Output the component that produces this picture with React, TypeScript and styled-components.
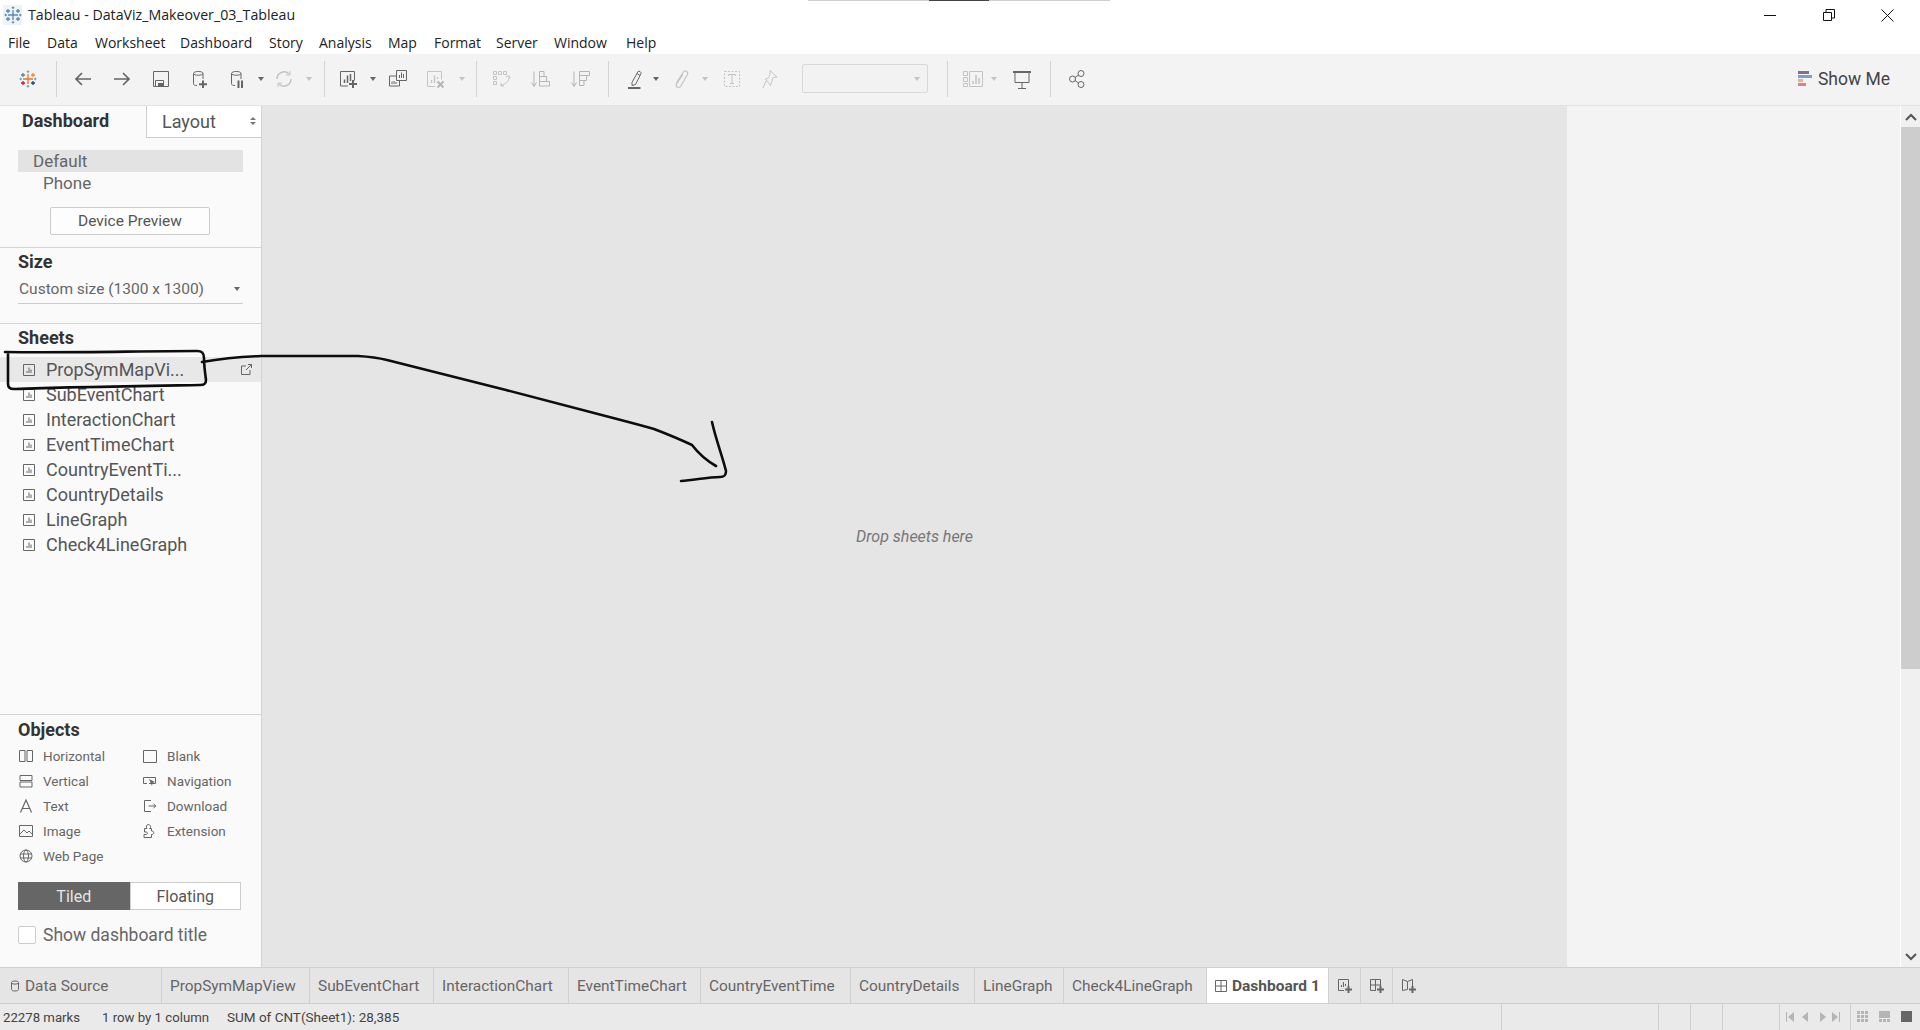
import React from 'react'
import styled, { createGlobalStyle } from 'styled-components'

const GlobalStyle = createGlobalStyle`
html, body { margin: 0; padding: 0; background: #fff; }
* { box-sizing: border-box; }
body { font-family: "Roboto", "Liberation Sans", sans-serif; color: #555; }
`

const SHEETS = ['PropSymMapVi...', 'SubEventChart', 'InteractionChart', 'EventTimeChart', 'CountryEventTi...', 'CountryDetails', 'LineGraph', 'Check4LineGraph']
const MENUS = [['File', 8], ['Data', 47], ['Worksheet', 95], ['Dashboard', 180], ['Story', 269], ['Analysis', 319], ['Map', 388], ['Format', 434], ['Server', 496], ['Window', 554], ['Help', 626]] as const
const TABS = [['PropSymMapView', 148], ['SubEventChart', 124], ['InteractionChart', 135], ['EventTimeChart', 132], ['CountryEventTime', 150], ['CountryDetails', 124], ['LineGraph', 89], ['Check4LineGraph', 143]] as const

const DARK = '#666'
const OFF = '#c4c4c4'

const Svg = ({ w = 20, h = 20, children, c = DARK }: { w?: number; h?: number; c?: string; children: React.ReactNode }) => (
    <svg width={w} height={h} viewBox={`0 0 ${w} ${h}`} fill="none" stroke={c} strokeWidth="1" style={{ flexShrink: 0 }}>{children}</svg>
)

const TableauLogo = ({ mono }: { mono?: boolean }) => {
    const col = (c: string) => (mono ? '#5b86b5' : c)
    return (
        <svg width="18" height="18" viewBox="0 0 18 18" strokeWidth="1.3" fill="none">
            <path d="M9 4v10M4 9h10" stroke={col('#e8762b')} />
            <path d="M4 3v4M2 5h4" stroke={col('#5b879b')} />
            <path d="M14 3v4M12 5h4" stroke={col('#eb912b')} />
            <path d="M4 11v4M2 13h4" stroke={col('#c72035')} />
            <path d="M14 11v4M12 13h4" stroke={col('#1f447e')} />
            <path d="M9 0.5v2.5M7.7 1.7h2.6M9 15v2.5M7.7 16.3h2.6M0.5 9h2.5M1.7 7.7v2.6M15 9h2.5M16.3 7.7v2.6" stroke={col('#7099a6')} strokeWidth="1" />
        </svg>
    )
}

const Cylinder = () => <path d="M4.500 4.500C4.500 1.800 14 1.800 14 4.500V10M4.500 4.500C4.500 6.800 14 6.800 14 4.500M4.500 4.500V14.500C4.500 16 5.500 16.500 8 16.500" />

const TOOLS: Record<string, React.ReactNode> = {
    logo: <TableauLogo />,
    back: <Svg><path d="M18 10H3M9 4l-6 6 6 6" strokeWidth="1.7" /></Svg>,
    fwd: <Svg><path d="M2 10h15M11 4l6 6-6 6" strokeWidth="1.7" /></Svg>,
    save: <Svg><path d="M2.500 2.500h15v15h-15zM4.500 17v-5.500h8V17" /><path d="M7 14h5v3H7z" fill={DARK} stroke="none" /></Svg>,
    newds: <Svg><Cylinder /><path d="M14 11.500v7.500M10 15.200h8" strokeWidth="2" /></Svg>,
    pause: <Svg><Cylinder /><path d="M11.500 11.500V19M15 11.500V19" strokeWidth="2" /></Svg>,
    refresh: <Svg c={OFF}><path d="M3 10a7 7 0 0 1 12-5M17 10a7 7 0 0 1-12 5" strokeWidth="1.5" /><path d="M16 2v4h-4M4 18v-4h4" /></Svg>,
    newsheet: <Svg><path d="M2.500 2.500h14v9M2.500 2.500v14.500H10" /><path d="M6.500 14v-3.500M9.500 14V6.500M12.500 12V5" strokeWidth="1.500" /><path d="M15 11v8M11 15h8" strokeWidth="2" /></Svg>,
    dup: <Svg><path d="M8.500 1.500h10v10h-10zM8.500 7H1.500v10h10v-5.500" /><path d="M11.500 9V6M13.500 9V3.500M15.500 9V5M4 15v-2.500M6 15v-3M8 15v-2" /></Svg>,
    clear: <Svg c={OFF}><path d="M2.500 2.500h14v8M2.500 2.500v15H10" /><path d="M6.500 14v-3M9.500 14V6.500M12.500 10V8" strokeWidth="1.300" /><path d="M12.500 12.500l6 6M18.500 12.500l-6 6" strokeWidth="2" stroke="#b5b5b5" /></Svg>,
    swap: <Svg c={OFF}><path d="M2.500 2.500h3v3h-3zM7.500 2.500h3v3h-3zM12.500 2.500h3v3h-3zM2.500 7.500h3v3h-3zM2.500 12.500h3v3h-3zM18 8c0 4-3 7-8 8.500M10 14v3h3M15 8l3-1.500 1 3" /></Svg>,
    sortUp: <Svg c="#b5b5b5"><path d="M4 2.500V17M1.500 13.500L4 17.500l2.500-4" /><path d="M9.500 2.500h4.500v5H9.500zM9.500 7.500h7v5h-7zM9.500 12.500h10v4.500h-10z" /></Svg>,
    sortDown: <Svg c="#b5b5b5"><path d="M4 2.500V17M1.500 13.500L4 17.500l2.500-4" /><path d="M9.500 2.500h10v4h-10zM9.500 6.500h7v5h-7zM9.500 11.500h4.500v5H9.500z" /></Svg>,
    pen: <Svg><path d="M7 13.500L13 2.500c1-1 3.500.5 3 2L10.500 15.500l-3.500 1zM12 4.500l3 2" /><path d="M3 19h12.500" strokeWidth="2" /></Svg>,
    clip: <Svg c={OFF}><path d="M5 14.500L12 3.500c2-3 5.500-1 4.500 2L9.500 17.500c-1.500 2-5 1-4-2.500l6.500-9.500" strokeWidth="1.200" /></Svg>,
    text: <Svg c={OFF}><path d="M2.500 2.500h15v15h-15z" strokeDasharray="2 1.500" /><path d="M6.500 7V5.500h7V7M10 5.500v9M8 14.500h4" /></Svg>,
    pin: <Svg c={OFF}><path d="M11 1.500l7 6.500-4 .5-1.500 5-1 3-5-6.500 3-1 1.500-3.500zM7 12l-3 7" /></Svg>,
    fit: <Svg w={20} c={OFF}><path d="M.5 2.500h4v4h-4zM.5 8.500h4v4h-4zM.5 14.500h4v3h-4zM6.500 2.500h13v15h-13z" /><path d="M10 15v-3M13 15V6M16 15V9" strokeWidth="1.500" /></Svg>,
    present: <Svg w={18}><path d="M0 3h18" strokeWidth="2" /><path d="M2 3v10.500h14V3M9 13.500V19M5 19.500h8" /></Svg>,
    share: <Svg w={16}><circle cx="3.500" cy="10" r="3" /><circle cx="12" cy="4.500" r="3" /><circle cx="12" cy="15.500" r="3" /><path d="M6 8.500l3.500-2.500M6 11.500l3.500 2.500" /></Svg>,
}

type Tool = { w: number; kind: 'tool' | 'caret' | 'sep'; icon?: string; off?: boolean }
const tool = (w: number, icon: string): Tool => ({ w, kind: 'tool', icon })
const caret = (w: number, off = true): Tool => ({ w, kind: 'caret', off })
const sep = (w: number): Tool => ({ w, kind: 'sep' })

const LEFT_TOOLS: Tool[] = [
    tool(40, 'logo'), sep(16), tool(38, 'back'), tool(40, 'fwd'), tool(38, 'save'), tool(38, 'newds'), tool(38, 'pause'), caret(10, false),
    tool(36, 'refresh'), caret(14), sep(16), tool(32, 'newsheet'), caret(18, false), tool(32, 'dup'), tool(42, 'clear'), caret(12),
    sep(16), tool(34, 'swap'), tool(44, 'sortUp'), tool(36, 'sortDown'), sep(20), tool(34, 'pen'), caret(8, false), tool(42, 'clip'),
    caret(6), tool(48, 'text'), tool(26, 'pin'),
]
const RIGHT_TOOLS: Tool[] = [sep(38), tool(14, 'fit'), caret(28), tool(28, 'present'), sep(28), tool(26, 'share')]

const renderTools = (list: Tool[]) => list.map((t, i) => {
    if (t.kind === 'sep') return <ToolSep key={i} $w={t.w}><i /></ToolSep>
    if (t.kind === 'caret') return <ToolSlot key={i} $w={t.w}><Caret $off={t.off} /></ToolSlot>
    return <ToolSlot key={i} $w={t.w}>{TOOLS[t.icon as string]}</ToolSlot>
})

const OBJECTS_LEFT: [string, React.ReactNode][] = [
    ['Horizontal', <Svg w={14} h={14}><path d="M.5 1.500h5.500v11H.5zM8 1.500h5.500v11H8z" /></Svg>],
    ['Vertical', <Svg w={14} h={14}><path d="M1 1.500h12v5H1zM1 8h12v5H1z" /></Svg>],
    ['Text', <Svg w={14} h={14}><path d="M1.500 13.500L7 1l5.500 12.500M3.500 9.500h7" strokeWidth="1.200" /></Svg>],
    ['Image', <Svg w={14} h={14}><path d="M.5 1.500h13v11H.5zM1 10l4-4 3 3 2-2 3 3" /></Svg>],
    ['Web Page', <Svg w={14} h={14}><circle cx="7" cy="7" r="6" /><ellipse cx="7" cy="7" rx="2.500" ry="6" /><path d="M1 5h12M1 9h12" /></Svg>],
]
const OBJECTS_RIGHT: [string, React.ReactNode][] = [
    ['Blank', <Svg w={14} h={14}><path d="M.5 1.500h13v12H.5z" /></Svg>],
    ['Navigation', <Svg w={14} h={14}><path d="M.5 3.500h12v6H6M.5 3.500v6H4" /><path d="M6 5l6 3-2.500 1L9 12z" fill={DARK} stroke="none" /></Svg>],
    ['Download', <Svg w={14} h={14}><path d="M8 1.500H1.500v11H8M5.500 7h7M10.500 5l2.500 2-2.500 2" /></Svg>],
    ['Extension', <Svg w={14} h={14}><path d="M4 4.500H1.500v3.500H3c2 0 2 2.500 0 2.500H1v3h7.500v-3c3 .5 3-4 0-3.500V4.500H6.500c2-1 1-4-1.200-4S3 3.500 4 4.500z" /></Svg>],
]

const ChartSheet = () => (
    <Svg w={14} h={14}><path d="M1.500 1.500h11v11h-11z" /><path d="M5 10V8M7 10V4.500M9 10V6.500" /></Svg>
)

const App = () => (
    <Page>
        <GlobalStyle />
        <TitleBar>
            <TableauLogoBox><TableauLogo mono /></TableauLogoBox>
            <TitleText>Tableau - DataViz_Makeover_03_Tableau</TitleText>
            <WinControls>
                <WinBtn><svg width="12" height="12" fill="none" stroke="#111"><path d="M0 6.500h12" /></svg></WinBtn>
                <WinBtn><svg width="12" height="12" fill="none" stroke="#111"><path d="M.5 3.500h8v8h-8zM3 3V.5h8.500V9H9" /></svg></WinBtn>
                <WinBtn><svg width="13" height="13" fill="none" stroke="#111"><path d="M.5.5l12 12M12.500.5l-12 12" /></svg></WinBtn>
            </WinControls>
        </TitleBar>
        <MenuBar>
            {MENUS.map(([label, x], i) => (
                <MenuItem key={label} $gap={i === 0 ? x : x - MENUS[i - 1][1]}>{label}</MenuItem>
            ))}
        </MenuBar>
        <Toolbar>
            {renderTools(LEFT_TOOLS)}
            <FontSelect><Caret $off /></FontSelect>
            {renderTools(RIGHT_TOOLS)}
            <ShowMe>
                <ShowMeIcon>
                    <Bar $w={11} $c="#7f6f90" /><Bar $w={14} $c="#7e9ec9" /><Bar $w={5} $c="#e9ae8d" /><Bar $w={8} $c="#e87c86" />
                </ShowMeIcon>
                Show Me
            </ShowMe>
        </Toolbar>
        <Main>
            <Sidebar>
                <PaneTabs>
                    <ActiveTab>Dashboard</ActiveTab>
                    <LayoutTab>Layout<SpinArrows /></LayoutTab>
                </PaneTabs>
                <DevicePanel>
                    <DeviceRow $active>Default</DeviceRow>
                    <PhoneRow>Phone</PhoneRow>
                    <PreviewButton>Device Preview</PreviewButton>
                </DevicePanel>
                <SizePanel>
                    <Heading>Size</Heading>
                    <SizeSelect>Custom size (1300 x 1300)<Caret /></SizeSelect>
                </SizePanel>
                <SheetsPanel>
                    <SheetsHeading>Sheets</SheetsHeading>
                    {SHEETS.map((s, i) => (
                        <SheetRow key={s} $active={i === 0}>
                            <ChartSheet />
                            <span>{s}</span>
                            {i === 0 && (
                                <OpenIcon><svg width="11" height="11" fill="none" stroke="#666"><path d="M5 2H.5v8.500H9V6M5 6l5.500-5.500M7 .5h3.500V4" /></svg></OpenIcon>
                            )}
                        </SheetRow>
                    ))}
                </SheetsPanel>
                <ObjectsPanel>
                    <ObjectsHeading>Objects</ObjectsHeading>
                    <ObjectsGrid>
                        <ObjectCol>
                            {OBJECTS_LEFT.map(([label, icon]) => <ObjectItem key={label}>{icon}<span>{label}</span></ObjectItem>)}
                        </ObjectCol>
                        <ObjectCol>
                            {OBJECTS_RIGHT.map(([label, icon]) => <ObjectItem key={label}>{icon}<span>{label}</span></ObjectItem>)}
                        </ObjectCol>
                    </ObjectsGrid>
                    <Toggle>
                        <ToggleBtn $on>Tiled</ToggleBtn>
                        <ToggleBtn>Floating</ToggleBtn>
                    </Toggle>
                    <CheckRow><CheckBox />Show dashboard title</CheckRow>
                </ObjectsPanel>
            </Sidebar>
            <Canvas><DropHint>Drop sheets here</DropHint></Canvas>
            <RightGutter />
            <ScrollBar>
                <ScrollArrow><svg width="12" height="8" fill="none" stroke="#555" strokeWidth="2"><path d="M1 7l5-5 5 5" /></svg></ScrollArrow>
                <ScrollThumb />
                <ScrollTrack />
                <ScrollArrow><svg width="12" height="8" fill="none" stroke="#555" strokeWidth="2"><path d="M1 1l5 5 5-5" /></svg></ScrollArrow>
            </ScrollBar>
        </Main>
        <TabBar>
            <Tab $w={162}>
                <svg width="8" height="12" fill="none" stroke="#666" style={{ margin: '0 6px 0 3px' }}><path d="M.5 2.500C.5.500 7.500.500 7.500 2.500v7c0 2-7 2-7 0zM.5 3c1 1.500 6 1.500 7 0" /></svg>
                Data Source
            </Tab>
            {TABS.map(([label, w]) => <Tab key={label} $w={w}>{label}</Tab>)}
            <ActiveSheetTab>
                <svg width="12" height="12" fill="none" stroke="#666" style={{ marginRight: 5 }}><path d="M.5.500h11v11H.5zM6 .5v11M.5 6h11" /></svg>
                Dashboard 1
            </ActiveSheetTab>
            <AddTab>
                <Svg w={16} h={16}><path d="M1.500 1.500h10v7M1.500 1.500v11H7M4.500 9V7M6.500 9V4M8.500 8V6" /><path d="M11.500 8v7M8 11.500h7" strokeWidth="2" /></Svg>
            </AddTab>
            <AddTab>
                <Svg w={16} h={16}><path d="M1.500 1.500h10v7M1.500 1.500v11H7M6.500 1.500v11M1.500 7h10" /><path d="M11.500 8v7M8 11.500h7" strokeWidth="2" /></Svg>
            </AddTab>
            <AddTab>
                <Svg w={16} h={16}><path d="M1.500 1.500l5 2 5-2v7M1.500 1.500v11l5-1M6.500 3.500v8" /><path d="M11.500 8v7M8 11.500h7" strokeWidth="2" /></Svg>
            </AddTab>
        </TabBar>
        <StatusBar>
            <Marks>22278 marks</Marks>
            <RowsText>1 row by 1 column</RowsText>
            <SumText>SUM of CNT(Sheet1): 28,385</SumText>
            <StatusCell $w={157} />
            <StatusCell $w={32} />
            <StatusCell $w={32} />
            <StatusCell $w={57} />
            <NavCell>
                <svg width="60" height="10" fill="#b5b5b5"><path d="M1 0h1v10H1zM9 0v10L3 5zM23 0v10l-6-5zM35 0v10l6-5zM47 0v10l6-5zM54 0h1v10h-1z" /></svg>
            </NavCell>
            <ViewCell>
                <svg width="58" height="12" viewBox="0 0 58 12">
                    <path d="M0 0h3v3H0zM4 0h3v3H4zM8 0h3v3H8zM0 4h3v3H0zM4 4h3v3H4zM8 4h3v3H8zM0 8h3v3H0zM4 8h3v3H4zM8 8h3v3H8z" fill="#b5b5b5" />
                    <path d="M22 0h11v7H22zM22 8h3v3h-3zM26 8h3v3h-3zM30 8h3v3h-3z" fill="#b5b5b5" />
                    <path d="M44 0h11v11H44z" fill="#666" />
                </svg>
            </ViewCell>
        </StatusBar>

        <TopStrip><TopStripMark /></TopStrip>
        <InkLayer width="1920" height="1030" viewBox="0 0 1920 1030">
            <path d="M5 352C70 353 140 351 197 351C202 351 204 353 204 358C204 366 205 372 206 380C206 384 204 385 200 385C140 386 70 387 14 389C10 389 8 387 8 384L8 353" />
            <path d="M202 362Q230 357 261 356L358 356Q375 357 387 360L506 390L617 419Q640 425 654 429Q675 437 692 445Q702 458 716 466" />
            <path d="M712 422C716 440 722 455 726 471C726 476 724 477 720 477C708 477 695 480 681 481" />
        </InkLayer>
    </Page>
)

export default App

const Page = styled.div`
position: relative;
display: flex;
flex-direction: column;
width: 1920px;
height: 1030px;
overflow: hidden;
background: #fff;
`

const TitleBar = styled.div`
display: flex;
align-items: center;
height: 30px;
padding-left: 3px;
flex-shrink: 0;
`

const TableauLogoBox = styled.div`
display: flex;
align-items: center;
justify-content: center;
width: 19px;
height: 20px;
margin-right: 6px;
background: #eef3f8;
`

const TitleText = styled.div`
font-family: "Open Sans", "Liberation Sans", sans-serif;
font-size: 14.2px;
color: #222;
margin-top: -2px;
`

const WinControls = styled.div`
display: flex;
margin-left: auto;
padding-right: 3px;
`

const WinBtn = styled.div`
display: flex;
align-items: center;
justify-content: center;
width: 59px;
height: 28px;
`

const MenuBar = styled.div`
display: flex;
align-items: center;
height: 24px;
flex-shrink: 0;
`

const MenuItem = styled.div<{ $gap: number }>`
width: 0;
margin-left: ${p => p.$gap}px;
white-space: nowrap;
font-family: "Open Sans", "Liberation Sans", sans-serif;
font-size: 14px;
color: #222;
`

const Toolbar = styled.div`
display: flex;
align-items: center;
height: 51px;
flex-shrink: 0;
padding: 0 0 2px 8px;
background: #f3f3f3;
`

const ToolSlot = styled.div<{ $w: number }>`
display: flex;
align-items: center;
justify-content: center;
width: ${p => p.$w}px;
height: 36px;
flex-shrink: 0;
`

const ToolSep = styled(ToolSlot)`
i {
    display: block;
    width: 1px;
    height: 36px;
    background: #d4d4d4;
}
`

const Caret = styled.span<{ $off?: boolean }>`
display: inline-block;
flex-shrink: 0;
width: 0;
height: 0;
border-left: 3.5px solid transparent;
border-right: 3.5px solid transparent;
border-top: 4px solid ${p => (p.$off ? '#c4c4c4' : '#666')};
`

const FontSelect = styled.div`
display: flex;
align-items: center;
justify-content: flex-end;
width: 126px;
height: 29px;
margin-left: 20px;
padding-right: 7px;
border: 1px solid #d8d8d8;
border-radius: 2px;
background: #f2f2f2;
flex-shrink: 0;
`

const ShowMe = styled.div`
display: flex;
align-items: center;
margin-left: auto;
padding-right: 30px;
font-size: 17.5px;
color: #444;
`

const ShowMeIcon = styled.div`
display: flex;
flex-direction: column;
gap: 1px;
width: 14px;
margin-right: 6px;
`

const Bar = styled.span<{ $w: number; $c: string }>`
display: block;
width: ${p => p.$w}px;
height: 3px;
background: ${p => p.$c};
`

const Main = styled.div`
display: flex;
flex: 1;
min-height: 0;
border-top: 1px solid #e2e2e2;
`

const Sidebar = styled.div`
display: flex;
flex-direction: column;
width: 262px;
flex-shrink: 0;
background: #fafafa;
border-right: 1px solid #d4d4d4;
`

const PaneTabs = styled.div`
display: flex;
height: 32px;
flex-shrink: 0;
`

const ActiveTab = styled.div`
display: flex;
align-items: center;
width: 146px;
padding: 0 0 3px 22px;
font-size: 18px;
font-weight: 700;
color: #333;
`

const LayoutTab = styled.div`
display: flex;
align-items: center;
flex: 1;
padding-left: 15px;
font-size: 18px;
color: #555;
background: #fff;
border-left: 1px solid #ccc;
border-bottom: 1px solid #ccc;
`

const SpinArrows = styled.span`
position: relative;
margin-left: 34px;
width: 0;
height: 0;
border-left: 3px solid transparent;
border-right: 3px solid transparent;
border-bottom: 3.5px solid #777;
transform: translateY(-3px);
&::after {
    content: '';
    position: absolute;
    left: -3px;
    top: 5px;
    width: 0;
    height: 0;
    border-left: 3px solid transparent;
    border-right: 3px solid transparent;
    border-top: 3.5px solid #777;
}
`

const DevicePanel = styled.div`
display: flex;
flex-direction: column;
height: 110px;
padding-top: 12px;
flex-shrink: 0;
border-bottom: 1px solid #d4d4d4;
`

const DeviceRow = styled.div<{ $active?: boolean }>`
display: flex;
align-items: center;
height: 22px;
margin: 0 18px;
padding-left: 15px;
font-size: 17px;
color: #666;
background: ${p => (p.$active ? '#e3e3e3' : 'transparent')};
`

const PhoneRow = styled(DeviceRow)`
padding-left: 25px;
`

const PreviewButton = styled.div`
display: flex;
align-items: center;
justify-content: center;
width: 160px;
height: 28px;
margin: 13px 0 0 50px;
font-size: 15.5px;
color: #555;
background: #fdfdfd;
border: 1px solid #ccc;
border-radius: 2px;
`

const Heading = styled.div`
font-size: 18px;
font-weight: 700;
color: #333;
line-height: 20px;
`

const SizePanel = styled.div`
display: flex;
flex-direction: column;
height: 76px;
padding: 4px 18px 0;
flex-shrink: 0;
border-bottom: 1px solid #d4d4d4;
`

const SizeSelect = styled.div`
display: flex;
align-items: center;
justify-content: space-between;
height: 30px;
margin-top: 2px;
padding: 0 3px 0 1px;
font-size: 15.5px;
color: #666;
border-bottom: 1px solid #ccc;
`

const SheetsPanel = styled.div`
display: flex;
flex-direction: column;
flex: 1;
padding-top: 4px;
border-bottom: 1px solid #d4d4d4;
`

const SheetsHeading = styled(Heading)`
padding-left: 18px;
margin-bottom: 9px;
`

const SheetRow = styled.div<{ $active?: boolean }>`
position: relative;
display: flex;
align-items: center;
height: 25px;
padding-left: 22px;
font-size: 18px;
color: #555;
background: ${p => (p.$active ? '#e8e8e8' : 'transparent')};
span {
    margin-left: 10px;
}
`

const OpenIcon = styled.span`
&& {
    display: flex;
    margin-left: auto;
    margin-right: 9px;
}
`

const ObjectsPanel = styled.div`
display: flex;
flex-direction: column;
height: 252px;
flex-shrink: 0;
padding: 5px 18px 0;
`

const ObjectsHeading = styled(Heading)``

const ObjectsGrid = styled.div`
display: grid;
grid-template-columns: 124px 1fr;
margin-top: 3px;
`

const ObjectCol = styled.div`
display: flex;
flex-direction: column;
`

const ObjectItem = styled.div`
display: flex;
align-items: center;
height: 25px;
font-size: 13.5px;
color: #666;
span {
    margin-left: 10px;
}
svg {
    margin-left: 1px;
}
`

const Toggle = styled.div`
display: flex;
width: 223px;
height: 28px;
margin-top: 14px;
`

const ToggleBtn = styled.div<{ $on?: boolean }>`
display: flex;
align-items: center;
justify-content: center;
flex: 1;
font-size: 16px;
color: ${p => (p.$on ? '#e5e5e5' : '#555')};
background: ${p => (p.$on ? '#666' : '#fff')};
border: 1px solid ${p => (p.$on ? '#666' : '#ccc')};
`

const CheckRow = styled.div`
display: flex;
align-items: center;
margin-top: 15px;
font-size: 17.5px;
color: #666;
`

const CheckBox = styled.span`
width: 18px;
height: 18px;
margin-right: 7px;
background: #fff;
border: 1px solid #ccc;
border-radius: 2px;
`

const Canvas = styled.div`
display: flex;
align-items: center;
justify-content: center;
width: 1305px;
flex-shrink: 0;
background: #e5e5e5;
`

const DropHint = styled.div`
font-size: 16px;
font-style: italic;
color: #777;
`

const RightGutter = styled.div`
flex: 1;
background: #f3f3f3;
`

const ScrollBar = styled.div`
display: flex;
flex-direction: column;
width: 20px;
flex-shrink: 0;
background: #f0f0f0;
border-left: 1px solid #fff;
`

const ScrollArrow = styled.div`
display: flex;
align-items: center;
justify-content: center;
height: 21px;
flex-shrink: 0;
`

const ScrollThumb = styled.div`
height: 542px;
background: #cdcdcd;
flex-shrink: 0;
`

const ScrollTrack = styled.div`
flex: 1;
`

const TabBar = styled.div`
display: flex;
height: 37px;
flex-shrink: 0;
background: #e5e5e5;
border-top: 1px solid #d0d0d0;
border-bottom: 1px solid #d0d0d0;
`

const Tab = styled.div<{ $w: number }>`
display: flex;
align-items: center;
width: ${p => p.$w}px;
padding-left: 8px;
font-size: 15.4px;
color: #666;
border-right: 1px solid #d0d0d0;
white-space: nowrap;
flex-shrink: 0;
`

const ActiveSheetTab = styled.div`
display: flex;
align-items: center;
width: 122px;
padding-left: 8px;
font-size: 15.5px;
font-weight: 700;
color: #555;
background: #fff;
border-right: 1px solid #d0d0d0;
white-space: nowrap;
flex-shrink: 0;
`

const AddTab = styled.div`
display: flex;
align-items: center;
justify-content: center;
width: 32px;
border-right: 1px solid #d0d0d0;
flex-shrink: 0;
&:last-child {
    border-right: 0;
}
`

const StatusBar = styled.div`
display: flex;
align-items: center;
height: 26px;
flex-shrink: 0;
padding-left: 3px;
font-size: 13.2px;
color: #444;
background: #eaeaea;
`

const Marks = styled.div`
width: 99px;
white-space: nowrap;
`

const RowsText = styled.div`
width: 125px;
white-space: nowrap;
`

const SumText = styled.div`
width: 1274px;
font-size: 13.5px;
white-space: nowrap;
`

const StatusCell = styled.div<{ $w: number }>`
width: ${p => p.$w}px;
height: 100%;
border-left: 1px solid #d0d0d0;
flex-shrink: 0;
`

const NavCell = styled.div`
display: flex;
align-items: center;
justify-content: center;
width: 71px;
height: 100%;
border-left: 1px solid #d0d0d0;
flex-shrink: 0;
`

const ViewCell = styled.div`
display: flex;
align-items: center;
justify-content: center;
flex: 1;
height: 100%;
border-left: 1px solid #d0d0d0;
`

const TopStrip = styled.div`
position: absolute;
top: 0;
left: 808px;
width: 302px;
height: 1px;
background: #cfcfcf;
`

const TopStripMark = styled.div`
width: 60px;
height: 1px;
margin-left: 121px;
background: #444;
`

const InkLayer = styled.svg`
position: absolute;
top: 0;
left: 0;
pointer-events: none;
fill: none;
stroke: #0d0d0d;
stroke-width: 2.6;
stroke-linecap: round;
stroke-linejoin: round;
`
